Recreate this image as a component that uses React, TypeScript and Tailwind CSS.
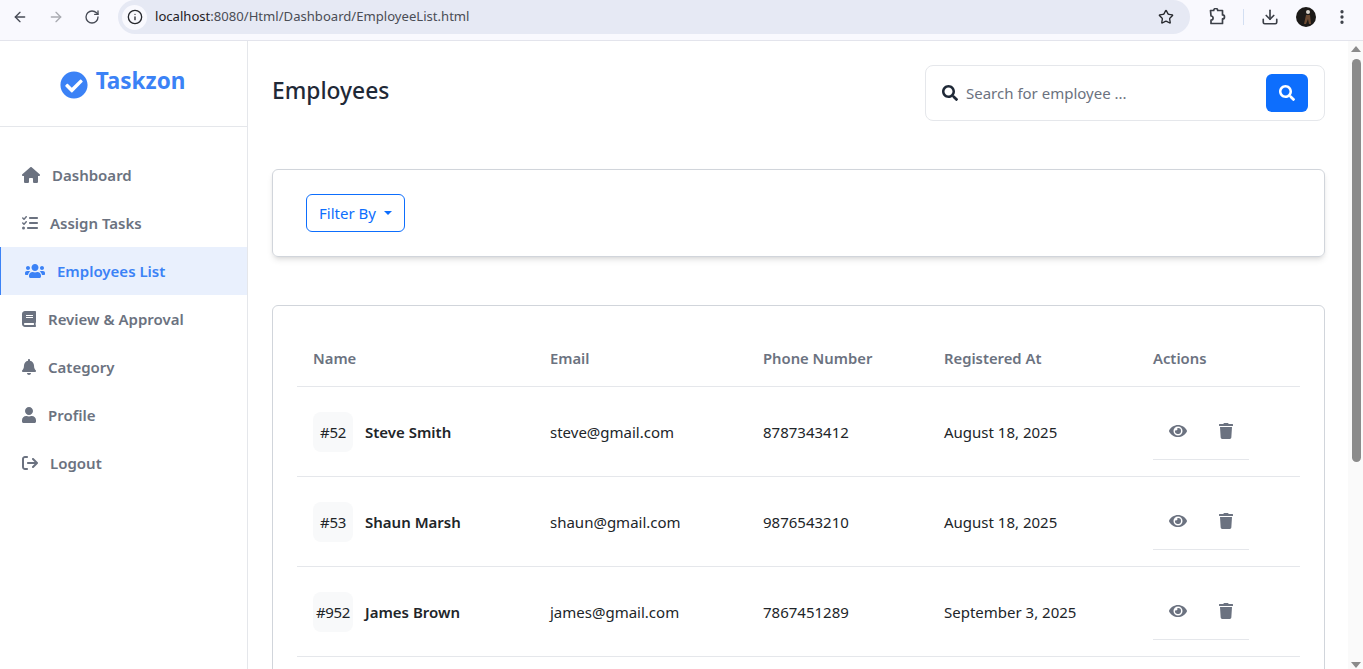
import { ArrowLeft, ArrowRight, Download, Info, MoreVertical, RotateCw, Star } from 'lucide-react'
import {
  FaBell,
  FaBook,
  FaCheckCircle,
  FaEye,
  FaSearch,
  FaTrash,
  FaUser,
  FaUsers,
} from 'react-icons/fa'
import { FaHouse, FaListCheck, FaArrowRightFromBracket } from 'react-icons/fa6'

const NAV_LINKS = [
  { label: 'Dashboard', icon: <FaHouse className="h-4 w-[18px]" /> },
  { label: 'Assign Tasks', icon: <FaListCheck className="h-4 w-4" /> },
  { label: 'Employees List', icon: <FaUsers className="ml-[3px] h-4 w-5" />, active: true },
  { label: 'Review & Approval', icon: <FaBook className="h-4 w-3.5" /> },
  { label: 'Category', icon: <FaBell className="h-4 w-3.5" /> },
  { label: 'Profile', icon: <FaUser className="h-4 w-3.5" /> },
  { label: 'Logout', icon: <FaArrowRightFromBracket className="h-4 w-4" /> },
]

const EMPLOYEES = [
  { id: '#52', name: 'Steve Smith', email: 'steve@gmail.com', phone: '8787343412', date: 'August 18, 2025' },
  { id: '#53', name: 'Shaun Marsh', email: 'shaun@gmail.com', phone: '9876543210', date: 'August 18, 2025' },
  { id: '#952', name: 'James Brown', email: 'james@gmail.com', phone: '7867451289', date: 'September 3, 2025' },
]

const COLS = 'grid grid-cols-[237px_213px_181px_209px_164px]'

function BrowserBar() {
  return (
    <div className="flex h-[41px] shrink-0 border-b border-[#e3e4ec] bg-[#f9f9fe] text-[#474b55]">
      <div className="flex h-[34px] w-[118px] items-center pl-3 pr-4">
        <ArrowLeft className="h-4 w-4" strokeWidth={2} />
        <ArrowRight className="ml-5 h-4 w-4 text-[#a9abb1]" strokeWidth={2} />
        <RotateCw className="ml-5 h-4 w-4" strokeWidth={2} />
      </div>
      <div className="flex h-[34px] w-[1072px] items-center rounded-[17px] bg-[#e6e9f4] pl-1 pr-4">
        <div className="flex h-[25px] w-[25px] items-center justify-center rounded-full bg-[#f9f9fe]">
          <Info className="h-4 w-4 text-[#26282d]" strokeWidth={2} />
        </div>
        <span className="ml-2 text-[13.1px] text-[#4a4d55]">
          <span className="text-[#1f2024]">localhost</span>:8080/Html/Dashboard/EmployeeList.html
        </span>
        <Star className="ml-auto h-4 w-4 text-[#26282d]" strokeWidth={2} />
      </div>
      <div className="flex h-[34px] flex-1 items-center pl-[18px]">
        <svg className="h-[18px] w-[18px] text-[#3c4048]" viewBox="0 0 18 18" fill="none" stroke="currentColor" strokeWidth="1.7" strokeLinejoin="round">
          <path d="M2.5 2.5h3.2a2 2 0 0 1 4 0h4.8v4.4a2 2 0 0 1 0 4v4.6H3v-3.3a2.1 2.1 0 0 0 0-4.2z" />
        </svg>
        <div className="ml-[17px] h-4 w-px bg-[#d3dff2]" />
        <Download className="ml-[17px] h-[18px] w-[18px] text-[#3c4048]" strokeWidth={2.2} />
        <svg className="ml-[17px] h-5 w-5" viewBox="0 0 20 20">
          <circle cx="10" cy="10" r="10" fill="#1c1a18" />
          <circle cx="12" cy="5" r="2" fill="#d8d4cc" />
          <path d="M10 8h4l1 9h-2l-1-5-2 5H8z" fill="#6b4a32" />
        </svg>
        <MoreVertical className="ml-[17px] h-[18px] w-[18px] text-[#3c4048]" strokeWidth={2.4} />
      </div>
    </div>
  )
}

function Sidebar() {
  return (
    <aside className="w-[248px] shrink-0 border-r border-[#e5e7eb] bg-white">
      <div className="flex h-[86px] items-start justify-center gap-[8px] border-b border-[#e5e7eb] pr-[2px] pt-[24px]">
        <FaCheckCircle className="mt-[6px] h-7 w-7 text-[#3b82f6]" />
        <span className="text-[22.5px] font-bold leading-8 text-[#3b82f6]">Taskzon</span>
      </div>
      <nav className="mt-6 flex flex-col">
        {NAV_LINKS.map((item, index) => (
          <a
            key={index}
            className={
              item.active
                ? 'flex h-12 items-center gap-3 border-l border-[#3b82f6] bg-[#e9f0fd] pl-[21px] text-[15px] font-semibold text-[#3b82f6]'
                : 'flex h-12 items-center gap-3 pl-[22px] text-[15px] font-semibold text-[#6b7280]'
            }
          >
            {item.icon}
            {item.label}
          </a>
        ))}
      </nav>
    </aside>
  )
}

function EmployeeRow({ employee }: { employee: (typeof EMPLOYEES)[number] }) {
  return (
    <div className={`${COLS} h-[90px] border-b border-[#e5e7eb] text-[15px] text-[#212529]`}>
      <div className="flex items-center gap-3 pl-4">
        <span className="flex h-10 w-10 items-center justify-center rounded-lg bg-[#f8f9fa] pt-[2px] text-[15px] tracking-[-0.3px]">
          {employee.id}
        </span>
        <span className="pt-[2px] font-semibold">{employee.name}</span>
      </div>
      <div className="flex items-center pl-4 pt-[2px]">{employee.email}</div>
      <div className="flex items-center pl-4 pt-[2px]">{employee.phone}</div>
      <div className="flex items-center pl-4 pt-[2px]">{employee.date}</div>
      <div className="pl-4">
        <div className="flex h-[73px] w-24 items-center gap-[31px] border-b border-[#e5e7eb] pl-[15px] pt-[15px] text-[#6b7280]">
          <FaEye className="h-4 w-5" />
          <FaTrash className="h-4 w-3.5" />
        </div>
      </div>
    </div>
  )
}

function Scrollbar() {
  return (
    <div className="flex w-[15px] shrink-0 flex-col items-center bg-[#fafafa]">
      <div className="mt-[5px] h-0 w-0 border-x-[5px] border-b-[6px] border-x-transparent border-b-[#8b8b8b]" />
      <div className="ml-[2px] mt-[7px] h-[403px] w-[9px] rounded-full bg-[#8b8b8b]" />
      <div className="mb-[1px] mt-auto h-0 w-0 border-x-[5px] border-t-[6px] border-x-transparent border-t-[#8b8b8b]" />
    </div>
  )
}

export default function App() {
  return (
    <div
      className="flex h-[669px] flex-col overflow-hidden bg-white"
      style={{ fontFamily: '"Noto Sans", sans-serif' }}
    >
      <BrowserBar />
      <div className="flex min-h-0 flex-1">
        <Sidebar />
        <main className="min-w-0 flex-1 overflow-hidden pl-6 pr-[23px] pt-6">
          <div className="flex items-start justify-between">
            <h1 className="mt-[8px] text-[22.8px] font-medium leading-9 text-[#1f2937]">Employees</h1>
            <div className="flex h-14 w-100 items-center rounded-lg border border-[#e5e7eb] pl-4 pr-4">
              <FaSearch className="h-4 w-4 text-[#1f2937]" />
              <span className="ml-2 text-[15px] text-[#6b7280]">Search for employee ...</span>
              <button className="ml-auto flex h-[38px] w-[42px] items-center justify-center rounded-md bg-[#0d6efd] text-white">
                <FaSearch className="h-4 w-4" />
              </button>
            </div>
          </div>

          <div className="mt-12 flex h-[88px] items-center rounded-md border border-[#d1d5db] px-[33px] shadow-md">
            <button className="flex h-[38px] w-[99px] items-center justify-center gap-2 rounded-md border border-[#0d6efd] text-[15px] text-[#0d6efd]">
              Filter By
              <span className="h-0 w-0 border-x-[4.5px] border-t-[4.5px] border-x-transparent border-t-[#0d6efd]" />
            </button>
          </div>

          <div className="mt-12 rounded-md border border-[#d1d5db] px-6 pb-10 pt-[26px]">
            <div className={`${COLS} h-[55px] border-b border-[#e5e7eb] pb-[2px] text-[14.8px] font-semibold text-[#6b7280]`}>
              <div className="flex items-center pl-4">Name</div>
              <div className="flex items-center pl-4">Email</div>
              <div className="flex items-center pl-4">Phone Number</div>
              <div className="flex items-center pl-4">Registered At</div>
              <div className="flex items-center pl-4">Actions</div>
            </div>
            {EMPLOYEES.map((employee) => (
              <EmployeeRow key={employee.id} employee={employee} />
            ))}
          </div>
        </main>
        <Scrollbar />
      </div>
    </div>
  )
}
